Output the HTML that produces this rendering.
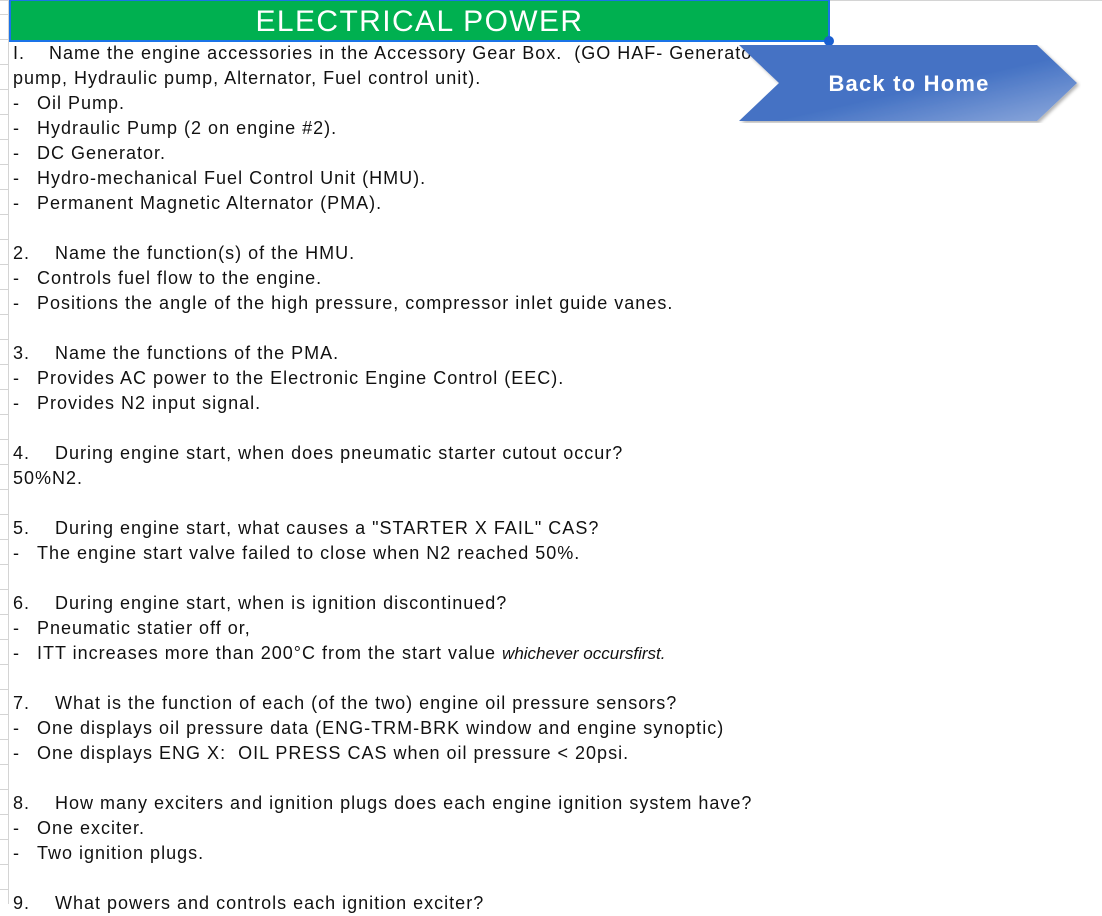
<!DOCTYPE html>
<html><head><meta charset="utf-8"><style>
html,body{margin:0;padding:0;width:1102px;height:904px;overflow:hidden;background:#fff;font-family:"Liberation Sans",sans-serif;}
.rows{position:absolute;left:0;top:14px;width:8px;height:890px;background:repeating-linear-gradient(to bottom,#d4d4d4 0,#d4d4d4 1px,transparent 1px,transparent 25px);}
.topline{position:absolute;left:0;top:0;width:1102px;height:1px;background:#d4d4d4;}
.hdr{position:absolute;left:9px;top:0;width:817px;height:39px;background:#00b050;border:2px solid #1a73e8;border-top:1px solid #1a73e8;color:#fff;font-size:30px;text-align:center;line-height:42px;letter-spacing:1.4px;}
.dot{position:absolute;left:824px;top:36px;width:10px;height:10px;border-radius:50%;background:#1a5fd0;}
.txt{position:absolute;left:13px;top:41px;font-size:18px;line-height:25px;color:#111;letter-spacing:1px;}
.txt div{height:25px;white-space:pre;}
.d{display:inline-block;width:24px;}
.n{display:inline-block;width:42px;}
.btn{position:absolute;left:739px;top:45px;width:342px;height:78px;}
</style></head><body>
<div class="topline"></div>
<div class="rows"></div>
<div style="position:absolute;left:8px;top:0;width:1px;height:904px;background:#d4d4d4"></div>
<div class="txt"><div><span style="display:inline-block;width:36px">I.</span>Name the engine accessories in the Accessory Gear Box.  (GO HAF- Generator,</div><div>pump, Hydraulic pump, Alternator, Fuel control unit).</div><div><span class="d">-</span>Oil Pump.</div><div><span class="d">-</span>Hydraulic Pump (2 on engine #2).</div><div><span class="d">-</span>DC Generator.</div><div><span class="d">-</span>Hydro-mechanical Fuel Control Unit (HMU).</div><div><span class="d">-</span>Permanent Magnetic Alternator (PMA).</div><div></div><div><span class="n">2.</span>Name the function(s) of the HMU.</div><div><span class="d">-</span>Controls fuel flow to the engine.</div><div><span class="d">-</span>Positions the angle of the high pressure, compressor inlet guide vanes.</div><div></div><div><span class="n">3.</span>Name the functions of the PMA.</div><div><span class="d">-</span>Provides AC power to the Electronic Engine Control (EEC).</div><div><span class="d">-</span>Provides N2 input signal.</div><div></div><div><span class="n">4.</span>During engine start, when does pneumatic starter cutout occur?</div><div>50%N2.</div><div></div><div><span class="n">5.</span>During engine start, what causes a "STARTER X FAIL" CAS?</div><div><span class="d">-</span>The engine start valve failed to close when N2 reached 50%.</div><div></div><div><span class="n">6.</span>During engine start, when is ignition discontinued?</div><div><span class="d">-</span>Pneumatic statier off or,</div><div><span class="d">-</span>ITT increases more than 200°C from the start value <i style="letter-spacing:0;font-size:17px">whichever occursfirst.</i></div><div></div><div><span class="n">7.</span>What is the function of each (of the two) engine oil pressure sensors?</div><div><span class="d">-</span>One displays oil pressure data (ENG-TRM-BRK window and engine synoptic)</div><div><span class="d">-</span>One displays ENG X:  OIL PRESS CAS when oil pressure &lt; 20psi.</div><div></div><div><span class="n">8.</span>How many exciters and ignition plugs does each engine ignition system have?</div><div><span class="d">-</span>One exciter.</div><div><span class="d">-</span>Two ignition plugs.</div><div></div><div><span class="n">9.</span>What powers and controls each ignition exciter?</div></div>
<div class="hdr">ELECTRICAL POWER</div>
<div class="dot"></div>
<svg class="btn" viewBox="0 0 342 78" width="342" height="78">
<defs><linearGradient id="g" x1="0" y1="0" x2="1" y2="1"><stop offset="0" stop-color="#4472c4"/><stop offset="0.55" stop-color="#4472c4"/><stop offset="1" stop-color="#8faadc"/></linearGradient>
<filter id="s"><feDropShadow dx="2" dy="2" stdDeviation="1.5" flood-color="#000" flood-opacity="0.3"/></filter></defs>
<polygon points="0,0 298,0 338,38 298,76 0,76 40,38" fill="url(#g)" filter="url(#s)"/>
<text x="170" y="46" text-anchor="middle" fill="#fff" font-family="Liberation Sans, sans-serif" font-weight="bold" font-size="22" letter-spacing="1.2">Back to Home</text>
</svg>
</body></html>
